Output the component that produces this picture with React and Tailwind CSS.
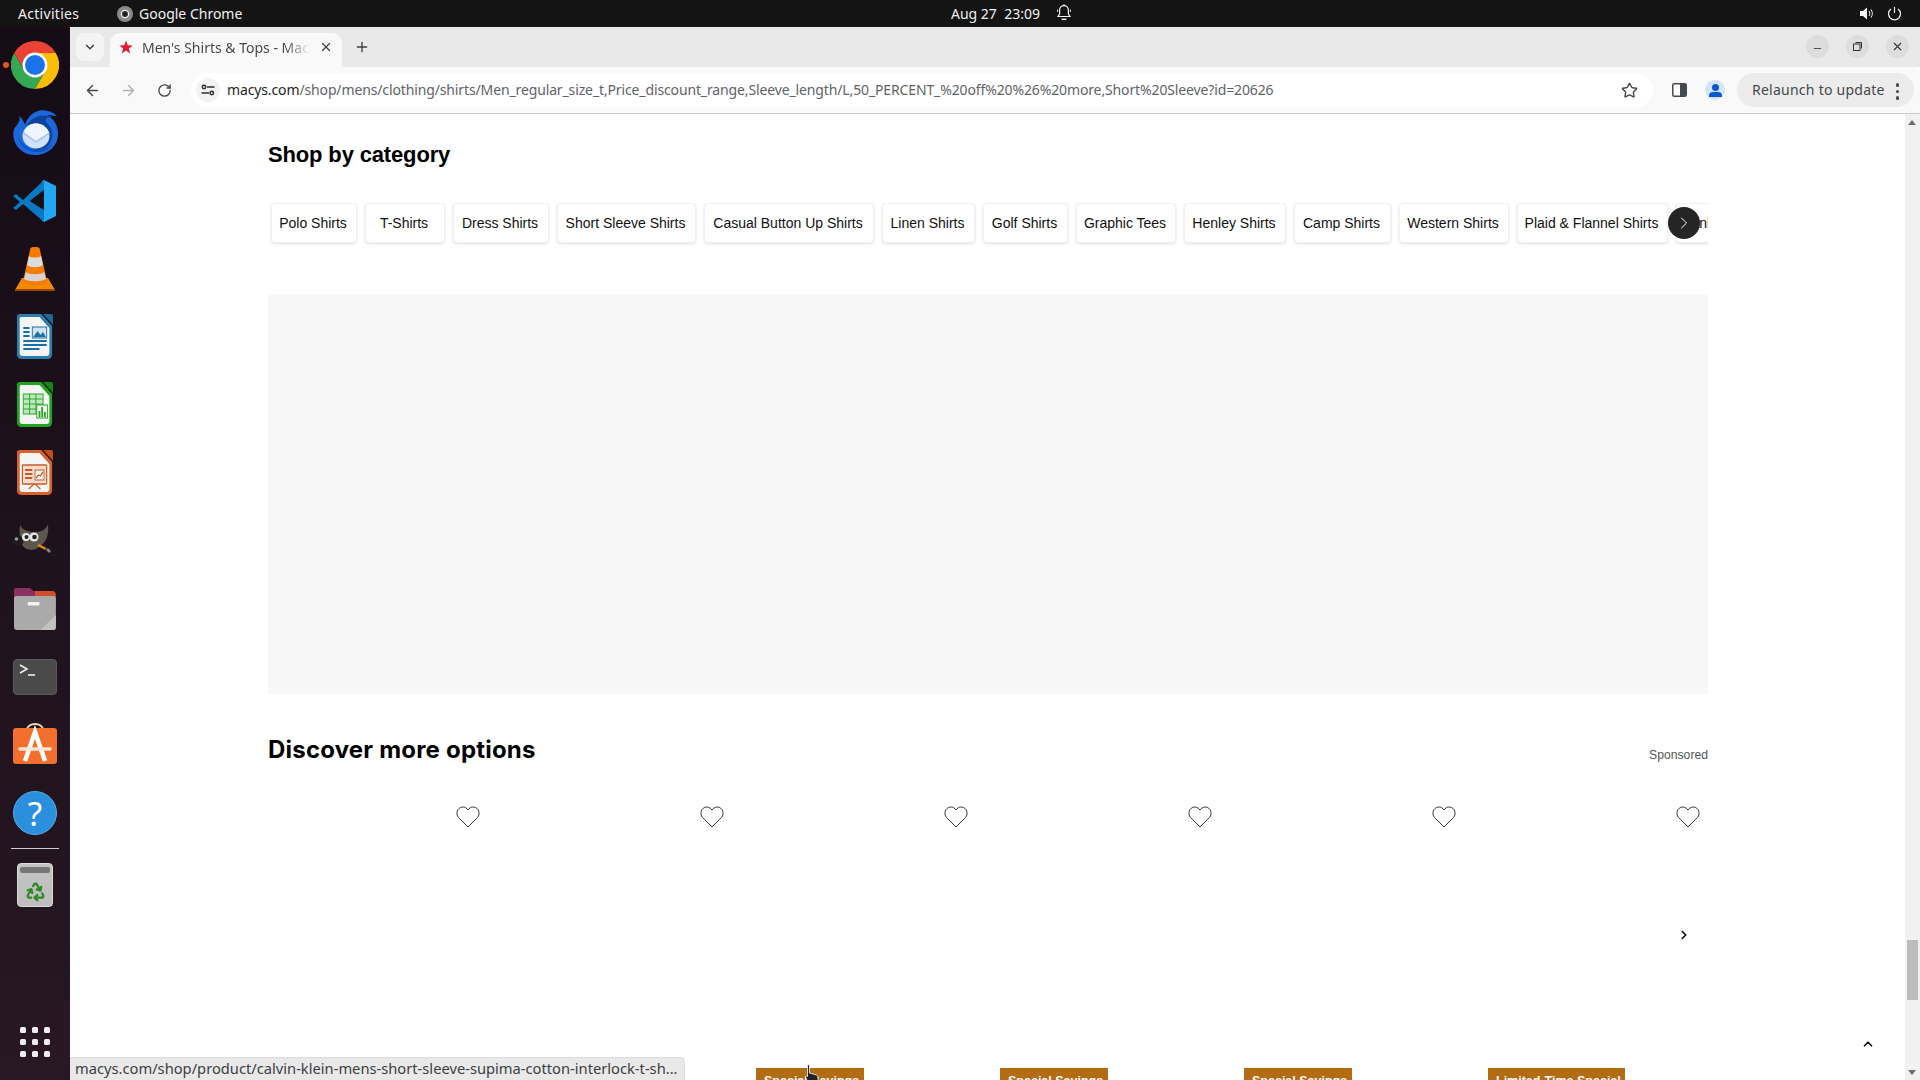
import React from "react";
import { ArrowLeft, ArrowRight, RotateCw, Star, X, Plus, ChevronDown, Recycle, Minus, ChevronRight, ChevronUp } from "lucide-react";

const chips = [
  ["Polo Shirts", "w-[86px]"],
  ["T-Shirts", "w-[80px]"],
  ["Dress Shirts", "w-[96px]"],
  ["Short Sleeve Shirts", "w-[139px]"],
  ["Casual Button Up Shirts", "w-[170px]"],
  ["Linen Shirts", "w-[93px]"],
  ["Golf Shirts", "w-[85px]"],
  ["Graphic Tees", "w-[100px]"],
  ["Henley Shirts", "w-[102px]"],
  ["Camp Shirts", "w-[97px]"],
  ["Western Shirts", "w-[110px]"],
  ["Plaid & Flannel Shirts", "w-[151px]"],
  ["Tank Tops", "w-[82px]"],
];

const Chrome = () => (
  <svg width="48" height="48" viewBox="0 0 48 48">
    <path d="M3.2 12A24 24 0 0 1 44.8 12H24A12 12 0 0 0 13.6 30Z" fill="#ea4335" />
    <path d="M3.2 12L13.6 30A12 12 0 0 0 34.4 30L24 48A24 24 0 0 1 3.2 12Z" fill="#34a853" />
    <path d="M44.8 12H24A12 12 0 0 1 34.4 30L24 48A24 24 0 0 0 44.8 12Z" fill="#fbbc04" />
    <circle cx="24" cy="24" r="12.5" fill="#fff" />
    <circle cx="24" cy="24" r="10" fill="#1a73e8" />
  </svg>
);
const Thunderbird = () => (
  <svg width="48" height="48" viewBox="0 0 48 48">
    <path d="M8 7C10 12 7 14 3 20C0 32 8 46 24 46C38 46 47 36 47 25C47 16 43 10 36 6L46 7C39 0 27 -1 20 6C17 9 15 12 14 16C13 13 11 9 8 7Z" fill="#1a68dc" />
    <path d="M15 18C19 8 31 4 41 8C35 8 33 11 36 14C41 19 43 26 40 32C37 39 29 43 21 40C31 40 38 32 37 24C35 15 23 11 15 18Z" fill="#0d429f" />
    <ellipse cx="25" cy="27" rx="13.5" ry="12.5" fill="#cfe2fb" />
    <path d="M13 23L25 32L38 23C35 17 30 14.5 25 14.5C20 14.5 15 17 13 23Z" fill="#eef5fe" />
    <path d="M12.5 24L25 33L38.5 24" stroke="#9fc2ee" strokeWidth="1.4" fill="none" />
    <path d="M7 27C9 39 20 44 29 43C35 42 39 39 41 35C35 41 25 43 17 39C12 36 9 32 7 27Z" fill="#0f50ba" />
  </svg>
);
const VSCode = () => (
  <svg width="48" height="48" viewBox="0 0 48 48">
    <path d="M33 3L45 9V39L33 45L31 44V4Z" fill="#22a7f2" />
    <path d="M33 3L12 23L5 17L2 19L9 25L2 31L5 33L12 27L33 45V33L19 24L33 13Z" fill="#0a78c2" />
    <path d="M33 13L19 24L33 33Z" fill="#0d1118" />
  </svg>
);
const VLC = () => (
  <svg width="48" height="48" viewBox="0 0 48 48">
    <path d="M4 45L11 33H37L44 45Z" fill="#f28a00" />
    <rect x="4" y="44" width="40" height="2" fill="#9a4a00" />
    <path d="M19.5 3C20 1.5 28 1.5 28.5 3L36 36C34 42 14 42 12 36Z" fill="#f57c00" />
    <path d="M18 11C20 13 28 13 30 11L32 20C29 23 19 23 16 20Z" fill="#dcdcdc" />
    <path d="M15 27C18 30 30 30 33 27L35 34C31 37 17 37 13 34Z" fill="#d4d4d4" />
  </svg>
);
const Doc = ({ border, fold, children }) => (
  <svg width="48" height="48" viewBox="0 0 48 48">
    <g transform="translate(3.3 0) scale(0.9 1)">
      <path d="M6 1H30L42 13V41Q42 46 37 46H8Q3 46 3 41V4Q3 1 6 1Z" fill={border} />
      <path d="M8 4H28L39 15V40Q39 43 36 43H9Q6 43 6 40V6Q6 4 8 4Z" fill="#f5f5f5" />
      <path d="M32 1H41Q43 1 43 3V12Z" fill={fold} />
      {children}
    </g>
  </svg>
);
const Writer = () => (
  <Doc border="#2a7fb0" fold="#1c6a97">
    <path d="M10 15H17M10 19H17M10 23H17M10 28H36M10 32H36M10 36H28" stroke="#1b6fa5" strokeWidth="2" />
    <rect x="20" y="14" width="16" height="11" fill="#cfe3f0" stroke="#1b6fa5" strokeWidth="1" />
    <path d="M21 24L26 18L29 22L32 19L35 24Z" fill="#1b6fa5" />
  </Doc>
);
const Calc = () => (
  <Doc border="#1da51d" fold="#128812">
    <rect x="10" y="13" width="22" height="20" fill="#bfe8bf" stroke="#25a525" strokeWidth="1" />
    <path d="M10 18H32M10 23H32M10 28H32M17 13V33M24 13V33" stroke="#25a525" strokeWidth="1" />
    <rect x="25" y="24" width="12" height="13" fill="#f5f5f5" stroke="#25a525" strokeWidth="1" />
    <path d="M28 36V30M31 36V26M34 36V31" stroke="#25a525" strokeWidth="2" />
  </Doc>
);
const Impress = () => (
  <Doc border="#d8622a" fold="#bf4e18">
    <rect x="9" y="16" width="27" height="19" rx="1" fill="#f6dccf" stroke="#c85a26" strokeWidth="1.3" />
    <path d="M12 21H20M12 25H20M12 29H20" stroke="#c85a26" strokeWidth="2.2" />
    <rect x="23" y="21" width="10" height="10" fill="#f5f5f5" stroke="#c85a26" />
    <path d="M24 29L27 26L29 27L32 23M22 35L16 40M23 35L29 40" stroke="#c85a26" strokeWidth="1.3" fill="none" />
  </Doc>
);
const Gimp = () => (
  <svg width="48" height="48" viewBox="0 0 48 48">
    <g transform="translate(0 3)">
      <path d="M9 5C12 11 18 12 24 12C30 12 35 10 37 4C38 14 36 22 28 27C22 32 14 30 11 25C9 20 8 12 9 5Z" fill="#5c564d" />
      <circle cx="7" cy="21" r="5.5" fill="#1c1c1c" />
      <circle cx="5.5" cy="19" r="1.8" fill="#9a9a9a" />
      <circle cx="15" cy="17" r="4" fill="#e8e8e8" />
      <circle cx="15.5" cy="17" r="2" fill="#222" />
      <circle cx="23" cy="17" r="4.5" fill="#e8e8e8" />
      <circle cx="23.5" cy="17" r="2.3" fill="#222" />
      <path d="M27 25L35 29" stroke="#e08a1e" strokeWidth="2.5" />
      <path d="M35 29L46 38" stroke="#1c1c1c" strokeWidth="3.5" />
      <path d="M36 29L39 32" stroke="#8a8a8a" strokeWidth="2.5" />
    </g>
  </svg>
);
const Files = () => (
  <svg width="48" height="48" viewBox="0 0 48 48">
    <g transform="translate(2.1 0) scale(0.91 1)">
      <path d="M1 6Q1 3 4 3H18L22 6H43Q47 6 47 10V22H1Z" fill="#d0502c" />
      <path d="M1 6Q1 3 4 3H18L22 6H24V12H1Z" fill="#8a2f63" />
      <path d="M1 14Q1 11 4 11H44Q47 11 47 14V42Q47 45 44 45H4Q1 45 1 42Z" fill="#aaaaaa" />
      <path d="M47 30V42Q47 45 44 45H30Z" fill="#c2c2c2" />
      <rect x="16" y="17" width="13" height="3.5" rx="1" fill="#f2f2f2" />
    </g>
  </svg>
);
const Terminal = () => (
  <div className="w-[44px] h-[36px] rounded-[4px] bg-[#4a4a4a] relative border border-[#5a5a5a]">
    <svg width="30" height="20" viewBox="0 0 30 20" className="absolute left-[5px] top-[3px]">
      <path d="M1 2L8 6L1 10" stroke="#eee" strokeWidth="1.6" fill="none" />
      <path d="M9 12H16" stroke="#eee" strokeWidth="1.6" />
    </svg>
  </div>
);
const AppStore = () => (
  <svg width="48" height="48" viewBox="0 0 48 48">
    <g transform="translate(0 -2)">
      <path d="M16 11C16 3 32 3 32 11" stroke="#f2d9b0" strokeWidth="2" fill="none" />
      <path d="M2 12Q2 9 5 9H43Q46 9 46 12V42Q46 45 43 45H5Q2 45 2 42Z" fill="#f36f2e" />
      <path d="M14 42L24 13L34 42" stroke="#fff" strokeWidth="4.5" fill="none" />
      <path d="M9 30H39" stroke="#fde4d6" strokeWidth="3.5" strokeLinecap="round" />
    </g>
  </svg>
);
const Help = () => (
  <div className="w-[44px] h-[44px] rounded-full bg-[#2a8fdd] border border-[#58adeb] flex items-center justify-center text-white text-[33px] font-['Noto_Sans',sans-serif] leading-none">?</div>
);
const Trash = () => (
  <div className="w-[36px] h-[44px] rounded-[4px] bg-gradient-to-b from-[#c4c4c4] to-[#bdbdbd] border border-[#dadada] flex flex-col items-center">
    <div className="w-[30px] h-[6px] mt-[3px] rounded-[2px] bg-[#777777]" />
    <Recycle size={21} strokeWidth={2.6} className="text-[#2a8a22] mt-[8px]" />
  </div>
);

const dock = [Chrome, Thunderbird, VSCode, VLC, Writer, Calc, Impress, Gimp, Files, Terminal, AppStore, Help];

const Heart = () => (
  <svg width="24" height="22" viewBox="0 0 24 22" fill="none" stroke="#333" strokeWidth="1">
    <path d="M12 21L2.5 11.5C-0.5 8 1 1.5 6.5 1C9 0.8 11 2.3 12 4C13 2.3 15 0.8 17.5 1C23 1.5 24.5 8 21.5 11.5Z" />
  </svg>
);

const Card = ({ badge, badgeW }) => (
  <div className="w-[232px] shrink-0">
    <div className="flex justify-end pr-[20px]"><Heart /></div>
    {badge ? (
      <div className={`mt-[240px] h-[24px] bg-[#b36b14] text-white text-[12.5px] font-bold px-[8px] pt-[6px] leading-[15px] whitespace-nowrap ${badgeW}`}>{badge}</div>
    ) : null}
  </div>
);

export default function App() {
  return (
    <div className="w-[1920px] h-[1080px] overflow-hidden flex flex-col bg-white font-['Noto_Sans',sans-serif] relative">
      {/* Top bar */}
      <div className="h-[27px] shrink-0 bg-[#141414] text-[#f0f0f0] text-[14px] relative flex items-center pl-[18px]">
        <span className="w-[99px] tracking-[0.3px]">Activities</span>
        <svg width="16" height="16" viewBox="0 0 16 16" className="mr-[6px]">
          <circle cx="8" cy="8" r="8" fill="#8a8a8a" />
          <circle cx="8" cy="8" r="3.6" fill="#222" stroke="#eee" strokeWidth="1.4" />
        </svg>
        <span>Google Chrome</span>
        <div className="absolute left-[951px] top-0 h-[27px] flex items-center">
          <span className="w-[104px] whitespace-pre">Aug 27  23:09</span>
          <svg width="18" height="19" viewBox="0 0 18 19" fill="none" stroke="#f0f0f0" strokeWidth="1.2" className="mb-[2px]">
            <path d="M3 13.5H15L13.4 11V7A4.4 4.4 0 0 0 4.6 7V11Z" />
            <path d="M9 2.6V1.2" />
            <path d="M6.6 16.3H11.4" strokeWidth="1.6" />
            <path d="M2.6 9V6.5M15.4 9V6.5" strokeWidth="0.9" />
          </svg>
        </div>
        <div className="absolute right-[18px] top-0 h-[27px] flex items-center gap-[13px]">
          <svg width="15" height="15" viewBox="0 0 15 15">
            <path d="M1 5H4L8 1.5V13.5L4 10H1Z" fill="#f4f4f4" />
            <path d="M10 5C11 6.5 11 8.5 10 10M12 3.5C13.8 6 13.8 9 12 11.5" stroke="#f4f4f4" fill="none" />
          </svg>
          <svg width="15" height="15" viewBox="0 0 15 15" fill="none" stroke="#f4f4f4" strokeWidth="1.2">
            <path d="M7.5 1V7" />
            <path d="M4 3A6 6 0 1 0 11 3" />
          </svg>
        </div>
      </div>

      <div className="flex-1 flex min-h-0">
        {/* Dock */}
        <div className="w-[70px] shrink-0 bg-gradient-to-b from-[#150c15] to-[#271823] flex flex-col items-center pt-[4px] relative">
          <div className="absolute left-[3px] top-[35px] w-[6px] h-[6px] rounded-full bg-[#e95420]" />
          {dock.map((I, i) => (
            <div key={i} className="h-[68px] shrink-0 flex items-center justify-center"><I /></div>
          ))}
          <div className="w-[48px] h-px bg-[#cfcbce] shrink-0 mt-[1px]" />
          <div className="h-[72px] shrink-0 flex items-center justify-center"><Trash /></div>
          <div className="mt-auto mb-[23px] grid grid-cols-3 gap-x-[6px] gap-y-[6px]">
            {Array.from({ length: 9 }).map((_, i) => (
              <div key={i} className="w-[6px] h-[6px] rounded-[1.5px] bg-[#f0eef0]" />
            ))}
          </div>
        </div>

        {/* Browser */}
        <div className="flex-1 flex flex-col min-w-0 relative">
          {/* Tab strip */}
          <div className="h-[40px] shrink-0 bg-[#e9e9e9] flex items-end pl-[6px] relative">
            <div className="w-[28px] h-[28px] mb-[6px] rounded-[8px] bg-[#f4f4f4] flex items-center justify-center text-[#3c4043]">
              <ChevronDown size={14} strokeWidth={2.4} />
            </div>
            <div className="ml-[6px] w-[232px] h-[34px] rounded-t-[10px] bg-[#f9f9f9] flex items-center pl-[9px] pr-[9px] pb-[6px] text-[14px] text-[#45484c]">
              <svg width="14" height="14" viewBox="0 0 24 24" fill="#e21a2c" className="shrink-0">
                <path d="M12 1L15 9L23.5 9.3L16.8 14.6L19.2 23L12 18.1L4.8 23L7.2 14.6L.5 9.3L9 9Z" />
              </svg>
              <span className="ml-[9px] w-[168px] overflow-hidden whitespace-nowrap [mask-image:linear-gradient(to_right,black_85%,transparent)]">Men's Shirts &amp; Tops - Macy's</span>
              <X size={14} strokeWidth={2.2} className="ml-auto text-[#3c4043]" />
            </div>
            <Plus size={16} strokeWidth={2} className="ml-[12px] mb-[12px] text-[#3c4043]" />
            <div className="absolute right-[11px] top-[8px] flex gap-[17px]">
              <div className="w-[23px] h-[23px] rounded-full bg-[#dddddd] flex items-center justify-center text-[#444]"><Minus size={11} className="mt-[3px]" /></div>
              <div className="w-[23px] h-[23px] rounded-full bg-[#dddddd] flex items-center justify-center">
                <svg width="11" height="11" viewBox="0 0 11 11" fill="none" stroke="#333" strokeWidth="1"><rect x="1.5" y="3" width="6.5" height="6.5" /><path d="M3.5 1.5H9.5V7.5" /></svg>
              </div>
              <div className="w-[23px] h-[23px] rounded-full bg-[#dddddd] flex items-center justify-center text-[#333]"><X size={13} strokeWidth={2} /></div>
            </div>
          </div>

          {/* Toolbar */}
          <div className="h-[47px] shrink-0 bg-[#f9f9f9] rounded-tr-[8px] border-b border-[#c9c9c9] flex items-center relative">
            <ArrowLeft size={17} strokeWidth={2} className="ml-[14px] text-[#45484c]" />
            <ArrowRight size={17} strokeWidth={2} className="ml-[19px] text-[#adb0b3]" />
            <RotateCw size={15} strokeWidth={2.2} className="ml-[20px] text-[#45484c]" />
            <div className="ml-[19px] w-[1462px] h-[34px] rounded-full bg-white flex items-center pl-[5px]">
              <div className="w-[24px] h-[24px] rounded-full bg-[#f2f2f2] flex items-center justify-center shrink-0">
                <svg width="14" height="12" viewBox="0 0 14 12" fill="none" stroke="#2c2c2c" strokeWidth="1.5">
                  <circle cx="3" cy="3" r="1.7" /><path d="M6 3H13.5M.5 9H8" /><circle cx="10.8" cy="9" r="1.7" />
                </svg>
              </div>
              <span className="ml-[7px] mb-[2px] text-[14px] tracking-[-0.13px] whitespace-nowrap text-[#5f6368]"><span className="text-[#1f1f1f]">macys.com</span>/shop/mens/clothing/shirts/Men_regular_size_t,Price_discount_range,Sleeve_length/L,50_PERCENT_%20off%20%26%20more,Short%20Sleeve?id=20626</span>
              <Star size={17} strokeWidth={2} className="ml-auto mr-[15px] text-[#45484c]" />
            </div>
            <svg width="15" height="14" viewBox="0 0 15 14" className="ml-[19px]">
              <rect x="0.75" y="0.75" width="13.5" height="12.5" rx="1.5" fill="#fff" stroke="#45484c" strokeWidth="1.5" />
              <rect x="8" y="1" width="6" height="12" fill="#45484c" />
            </svg>
            <div className="ml-[18px] w-[20px] h-[20px] rounded-full bg-[#d3e3fd] relative overflow-hidden">
              <div className="absolute left-[6.5px] top-[3.5px] w-[7px] h-[7px] rounded-full bg-[#0b57d0]" />
              <div className="absolute left-[3.5px] top-[11.5px] w-[13px] h-[5.5px] rounded-t-[4px] bg-[#0b57d0]" />
            </div>
            <div className="ml-[12px] w-[177px] h-[34px] rounded-full bg-[#ececec] flex items-center pl-[15px] pb-[2px] text-[14px] tracking-[0.25px] text-[#45484c] relative whitespace-nowrap">
              Relaunch to update
              <div className="absolute right-[15px] top-[10px] flex flex-col gap-[3px]">
                <div className="w-[3.5px] h-[3.5px] rounded-full bg-[#45484c]" />
                <div className="w-[3.5px] h-[3.5px] rounded-full bg-[#45484c]" />
                <div className="w-[3.5px] h-[3.5px] rounded-full bg-[#45484c]" />
              </div>
            </div>
          </div>

          {/* Page */}
          <div className="flex-1 flex min-h-0 relative">
            <div className="flex-1 min-w-0 overflow-hidden pl-[198px] font-['Liberation_Sans',sans-serif]">
              <div className="w-[1440px]">
                <h2 className="mt-[27px] text-[22px] tracking-[-0.15px] leading-[28px] font-bold text-black">Shop by category</h2>
                <div className="relative mt-[34px] h-[51px] overflow-hidden">
                  <div className="flex gap-[8px] pl-[2.5px]">
                    {chips.map(([c, w]) => (
                      <div key={c} className={`${w} h-[40px] shrink-0 rounded-[4px] bg-white border border-[#f0f0f0] shadow-[0_1px_3px_rgba(0,0,0,0.12)] flex items-center ${c === "Tank Tops" ? "justify-start pl-[8px]" : "justify-center pr-[1px]"} text-[14px] text-[#111] whitespace-nowrap`}>
                        {c}
                      </div>
                    ))}
                  </div>
                  <div className="absolute left-[1400px] top-[4px] w-[32px] h-[32px] rounded-full bg-[#252525] flex items-center justify-center text-white">
                    <ChevronRight size={20} strokeWidth={1.2} />
                  </div>
                </div>
                <div className="mt-[40px] h-[400px] bg-[#f7f7f7]" />
                <div className="mt-[40px] flex items-end justify-between">
                  <h2 className="text-[24px] tracking-[0.2px] leading-[32px] font-bold text-black font-['Inter',sans-serif]">Discover more options</h2>
                  <span className="text-[12.2px] leading-[16px] text-[#555] mb-[3px]">Sponsored</span>
                </div>
                <div className="relative mt-[40px] overflow-hidden h-[290px]">
                  <div className="flex gap-[12px]">
                    <Card /><Card />
                    <Card badge="Special Savings" badgeW="w-[108px]" />
                    <Card badge="Special Savings" badgeW="w-[108px]" />
                    <Card badge="Special Savings" badgeW="w-[108px]" />
                    <Card badge="Limited-Time Special" badgeW="w-[137px]" />
                  </div>
                  <ChevronRight size={14} strokeWidth={3} className="absolute left-[1409px] top-[122px] text-[#111]" />
                </div>
              </div>
            </div>
            {/* Scrollbar */}
            <div className="w-[15px] shrink-0 bg-[#f1f1f1] relative">
              <div className="absolute left-[2px] top-[826px] w-[11px] h-[60px] bg-[#bdbdbd]" />
              <div className="absolute left-[3px] top-[6px] w-0 h-0 border-x-[4px] border-x-transparent border-b-[5px] border-b-[#6e6e6e]" />
              <div className="absolute left-[3px] bottom-[5px] w-0 h-0 border-x-[4px] border-x-transparent border-t-[5px] border-t-[#6e6e6e]" />
            </div>
            <ChevronUp size={14} strokeWidth={3} className="absolute left-[1791px] top-[923px] text-[#111]" />
            {/* Status bubble */}
            <div className="absolute left-0 bottom-0 w-[615px] h-[23px] bg-[#e9e9e9] rounded-tr-[5px] border-t border-r border-[#dcdcdc] pl-[5px] text-[14.7px] leading-[20px] text-[#3c4043] whitespace-nowrap font-['Noto_Sans',sans-serif]">
              macys.com/shop/product/calvin-klein-mens-short-sleeve-supima-cotton-interlock-t-sh...
            </div>
            {/* Pointer */}
            <svg width="14" height="20" viewBox="0 0 14 20" className="absolute left-[735px] top-[950px]">
              <path d="M2.5 1.5C2.5 .5 4.5 .5 4.5 1.5V9L10 10.5C12 11 13 12 13 14V20H3.5L0.5 13C0.5 12 2 11.5 2.5 12.5Z" fill="#222" stroke="#fff" strokeWidth="0.8" />
            </svg>
          </div>
        </div>
      </div>
    </div>
  );
}
